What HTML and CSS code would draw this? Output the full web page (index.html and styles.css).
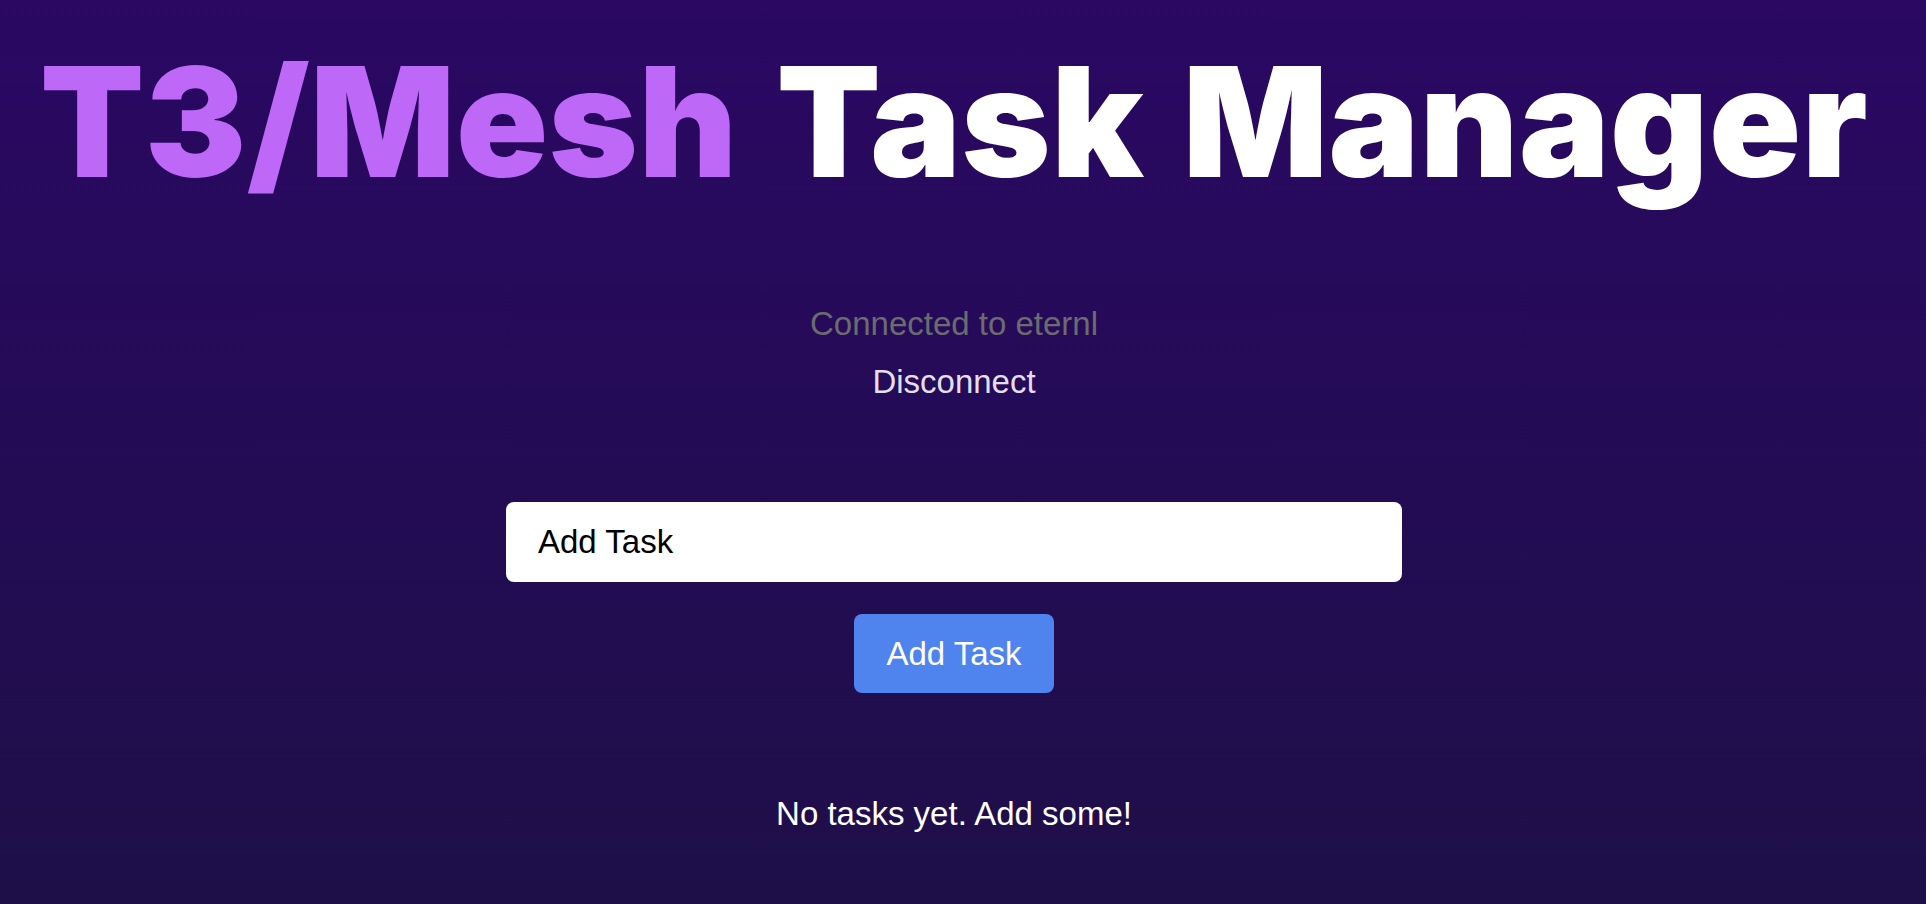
FILE: index.html
```html
<!DOCTYPE html>
<html lang="en">
<head>
<meta charset="utf-8">
<title>T3/Mesh Task Manager</title>
<link rel="stylesheet" href="styles.css">
</head>
<body>
<main class="page">
  <h1 class="title"><span class="accent">T3/Mesh</span> Task Manager</h1>
  <section class="wallet">
    <p class="wallet-status">Connected to eternl</p>
    <button class="wallet-disconnect" type="button">Disconnect</button>
  </section>
  <form class="task-form">
    <input class="task-input" type="text" placeholder="Add Task">
    <button class="task-submit" type="button">Add Task</button>
  </form>
  <p class="empty">No tasks yet. Add some!</p>
</main>
</body>
</html>
```

FILE: styles.css
```css
html, body {
  margin: 0;
  padding: 0;
}

body {
  min-height: 100vh;
  background: linear-gradient(to bottom, #2a0863 0%, #1e0f48 100%);
  font-family: "Liberation Sans", Arial, sans-serif;
  overflow: hidden;
}

.page {
  display: flex;
  flex-direction: column;
  align-items: center;
  padding: 44px 18px 0 0;
}

.title {
  margin: 0;
  font-family: Inter, "Liberation Sans", sans-serif;
  font-weight: 900;
  font-size: 152px;
  line-height: 157px;
  letter-spacing: 0.5px;
  word-spacing: 8px;
  color: #ffffff;
  white-space: nowrap;
}

.accent {
  color: #bd68f6;
}

.wallet {
  display: flex;
  flex-direction: column;
  align-items: center;
  gap: 18px;
  margin-top: 103px;
}

.wallet-status {
  margin: 0;
  font-size: 33px;
  line-height: 40px;
  color: #6c6c6e;
}

.wallet-disconnect {
  margin: 0;
  padding: 0;
  border: 0;
  background: none;
  font-family: inherit;
  font-size: 33px;
  line-height: 40px;
  color: #e2dfea;
  cursor: pointer;
}

.task-form {
  display: flex;
  flex-direction: column;
  align-items: center;
  gap: 32px;
  margin-top: 100px;
}

.task-input {
  box-sizing: border-box;
  width: 896px;
  height: 80px;
  padding: 0 32px;
  border: 0;
  border-radius: 8px;
  background: #ffffff;
  font-family: inherit;
  font-size: 33px;
  color: #000000;
  outline: none;
}

.task-input::placeholder {
  color: #000000;
  opacity: 1;
}

.task-submit {
  box-sizing: border-box;
  height: 79px;
  padding: 0 32px;
  border: 0;
  border-radius: 8px;
  background: #4f83ee;
  font-family: inherit;
  font-size: 33px;
  color: #ffffff;
  cursor: pointer;
}

.empty {
  margin: 101px 0 0;
  font-size: 33px;
  line-height: 40px;
  color: #ffffff;
}
```
